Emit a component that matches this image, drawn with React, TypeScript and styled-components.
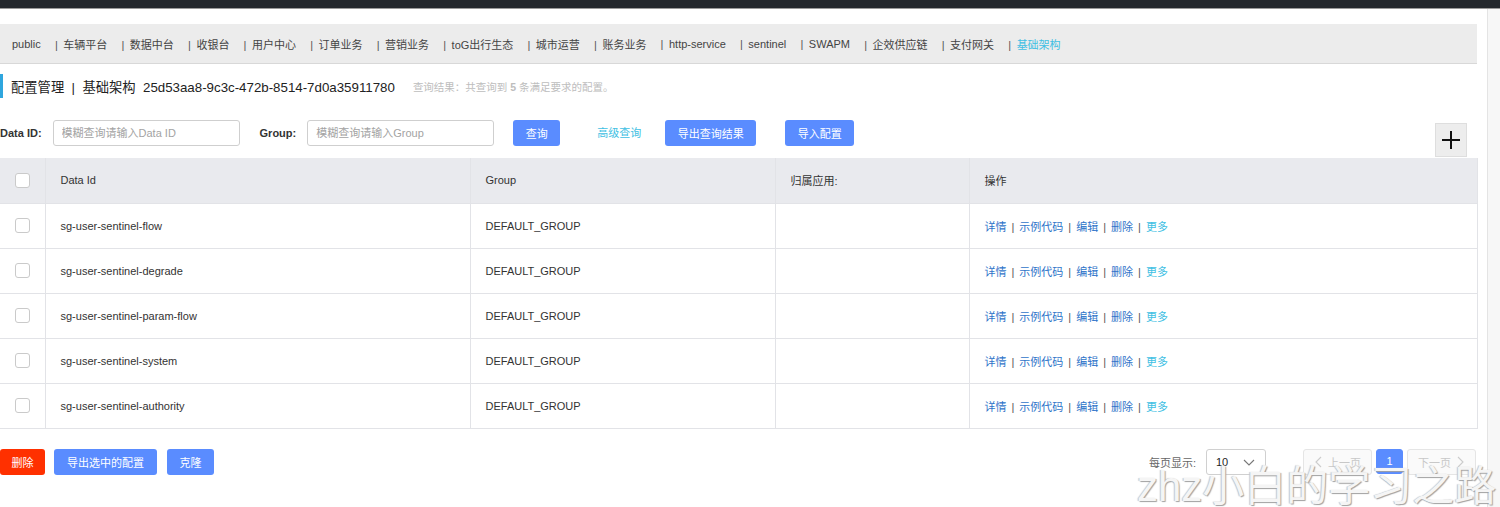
import styled, { createGlobalStyle } from "styled-components";

const GlobalStyle = createGlobalStyle`
  body {
    margin: 0;
    font-family: "Liberation Sans", "Noto Sans CJK SC", sans-serif;
    color: #333;
    background: #fff;
    overflow: hidden;
  }
`;

const TopBar = styled.div`
  height: 8px;
  background: #24282d;
  border-bottom: 1px solid #9a9a9a;
`;

const Shell = styled.div`
  display: flex;
  height: 498px;
`;

const Content = styled.div`
  width: 1487px;
  padding-top: 15px;
  position: relative;
`;

const Track = styled.div`
  flex: 1;
  background: #f7f7f7;
  border-left: 1px solid #e4e4e4;
`;

const Nav = styled.div`
  width: 1465px;
  height: 39px;
  padding-left: 12px;
  background: #ececec;
  border-bottom: 1px solid #d8d8d8;
  display: flex;
  align-items: center;
  font-size: 11px;
  color: #444;
`;

const NavItem = styled.span<{ $active?: boolean }>`
  color: ${(p) => (p.$active ? "#3fbfe3" : "#444")};
  white-space: nowrap;
`;

const NavSep = styled.span`
  color: #555;
  margin: 0 5.5px 0 14.2px;
`;

const TitleRow = styled.div`
  margin-top: 10px;
  height: 24px;
  display: flex;
  align-items: center;
  border-left: 3px solid #2fa6de;
  padding-left: 8px;
`;

const Title = styled.span`
  font-size: 13.3px;
  color: #222;
  white-space: nowrap;
`;

const Hint = styled.span`
  margin-left: 18px;
  font-size: 10.5px;
  color: #bdbdbd;
  b {
    font-weight: bold;
  }
`;

const SearchRow = styled.div`
  margin-top: 22px;
  display: flex;
  align-items: flex-start;
  width: 1477px;
`;

const Label = styled.label<{ $gap?: number }>`
  height: 26px;
  line-height: 26px;
  font-size: 11px;
  font-weight: bold;
  color: #333;
  margin-left: ${(p) => p.$gap ?? 0}px;
  margin-right: 11px;
`;

const Input = styled.input`
  box-sizing: border-box;
  width: 187px;
  height: 26px;
  border: 1px solid #cfcfcf;
  border-radius: 3px;
  padding: 0 8px;
  font-family: inherit;
  font-size: 11px;
  outline: none;
  &::placeholder {
    color: #a3a3a3;
  }
`;

const Button = styled.button<{ $w: number; $gap?: number; $danger?: boolean }>`
  box-sizing: border-box;
  width: ${(p) => p.$w}px;
  height: 26px;
  margin-left: ${(p) => p.$gap ?? 0}px;
  border: none;
  border-radius: 3px;
  background: ${(p) => (p.$danger ? "#ff3000" : "#5a8cff")};
  color: #fff;
  font-family: inherit;
  font-size: 11px;
  padding: 0;
  cursor: pointer;
`;

const LinkText = styled.span<{ $gap?: number }>`
  margin-left: ${(p) => p.$gap ?? 0}px;
  height: 26px;
  line-height: 26px;
  font-size: 11px;
  color: #3fbfe3;
`;

const PlusButton = styled.button`
  margin-left: auto;
  margin-right: 10px;
  margin-top: 3px;
  width: 32px;
  height: 34px;
  border: 1px solid #dedede;
  background: #ededed;
  padding: 0;
  display: flex;
  align-items: center;
  justify-content: center;
`;

const Table = styled.table`
  margin-top: 1px;
  width: 1477px;
  border-collapse: collapse;
  table-layout: fixed;
  font-size: 11px;
`;

const Th = styled.th<{ $w: number }>`
  box-sizing: border-box;
  width: ${(p) => p.$w}px;
  height: 45px;
  background: #e9eaee;
  border: 1px solid #e2e3e7;
  border-top: none;
  text-align: left;
  font-weight: normal;
  color: #333;
  padding: 0 0 0 15px;
  &:first-child {
    border-left: none;
    padding: 0;
    text-align: center;
  }
`;

const Td = styled.td`
  box-sizing: border-box;
  height: 45px;
  border: 1px solid #e2e3e7;
  padding: 0 0 0 15px;
  color: #333;
  &:first-child {
    border-left: none;
    padding: 0;
    text-align: center;
  }
`;

const Check = styled.span`
  display: inline-block;
  box-sizing: border-box;
  width: 15px;
  height: 15px;
  border: 1px solid #cacaca;
  border-radius: 3px;
  background: #fff;
  vertical-align: middle;
`;

const Action = styled.span<{ $more?: boolean }>`
  color: ${(p) => (p.$more ? "#3fbfe3" : "#2f74c9")};
`;

const ActionSep = styled.span`
  color: #555;
  margin: 0 5px;
`;

const Footer = styled.div`
  margin-top: 20px;
  width: 1476px;
  display: flex;
  align-items: center;
  justify-content: space-between;
`;

const Group = styled.div`
  display: flex;
  align-items: center;
`;

const PageLabel = styled.span`
  font-size: 11px;
  color: #666;
  margin-right: 10px;
`;

const Select = styled.div`
  box-sizing: border-box;
  width: 60px;
  height: 26px;
  border: 1px solid #d0d0d0;
  border-radius: 3px;
  display: flex;
  align-items: center;
  justify-content: space-between;
  padding: 0 10px 0 9px;
  font-size: 11px;
  color: #222;
`;

const PageButton = styled.div<{ $w: number; $gap: number; $current?: boolean }>`
  box-sizing: border-box;
  width: ${(p) => p.$w}px;
  height: ${(p) => (p.$current ? 25 : 26)}px;
  margin-left: ${(p) => p.$gap}px;
  border: 1px solid ${(p) => (p.$current ? "#5a8cff" : "#e5e5e5")};
  border-radius: 3px;
  background: ${(p) => (p.$current ? "#5a8cff" : "#fafafa")};
  color: ${(p) => (p.$current ? "#fff" : "#c8c8c8")};
  font-size: 11px;
  display: flex;
  align-items: center;
  justify-content: center;
  gap: 5px;
  align-self: flex-start;
`;

const Watermark = styled.div`
  position: absolute;
  left: 1137px;
  top: 452px;
  font-size: 42px;
  line-height: 52px;
  color: #f5f5f5;
  text-shadow: 1px 1px 1px #a0a0a0, -1px 0 1px #c4c4c4;
  white-space: nowrap;
  pointer-events: none;
`;

const Chevron = ({ dir }: { dir: "left" | "right" | "down" }) => {
  const d =
    dir === "left" ? "M7 1 L2 6 L7 11" : dir === "right" ? "M2 1 L7 6 L2 11" : "M1 3 L6 8 L11 3";
  const w = dir === "down" ? 12 : 9;
  const h = dir === "down" ? 10 : 12;
  return (
    <svg width={w} height={h} viewBox={`0 0 ${w} ${h}`}>
      <path d={d} fill="none" stroke={dir === "down" ? "#777" : "#ccc"} strokeWidth="1.1" />
    </svg>
  );
};

const navItems = [
  "public",
  "车辆平台",
  "数据中台",
  "收银台",
  "用户中心",
  "订单业务",
  "营销业务",
  "toG出行生态",
  "城市运营",
  "账务业务",
  "http-service",
  "sentinel",
  "SWAPM",
  "企效供应链",
  "支付网关",
  "基础架构",
];

const rows = [
  "sg-user-sentinel-flow",
  "sg-user-sentinel-degrade",
  "sg-user-sentinel-param-flow",
  "sg-user-sentinel-system",
  "sg-user-sentinel-authority",
];

const actions = ["详情", "示例代码", "编辑", "删除"];

function App() {
  return (
    <>
      <GlobalStyle />
      <TopBar />
      <Shell>
        <Content>
          <Nav>
            {navItems.map((n, i) => (
              <span key={n}>
                {i > 0 && <NavSep>|</NavSep>}
                <NavItem $active={i === navItems.length - 1}>{n}</NavItem>
              </span>
            ))}
          </Nav>
          <TitleRow>
            <Title>配置管理&nbsp;&nbsp;|&nbsp;&nbsp;基础架构&nbsp;&nbsp;25d53aa8-9c3c-472b-8514-7d0a35911780</Title>
            <Hint>
              查询结果：共查询到 <b>5</b> 条满足要求的配置。
            </Hint>
          </TitleRow>
          <SearchRow>
            <Label>Data ID:</Label>
            <Input placeholder="模糊查询请输入Data ID" />
            <Label $gap={20}>Group:</Label>
            <Input placeholder="模糊查询请输入Group" />
            <Button $w={47} $gap={19}>查询</Button>
            <LinkText $gap={37}>高级查询</LinkText>
            <Button $w={91} $gap={24}>导出查询结果</Button>
            <Button $w={69} $gap={29}>导入配置</Button>
            <PlusButton>
              <svg width="20" height="20" viewBox="0 0 20 20">
                <path d="M10 1 V19 M1 10 H19" stroke="#111" strokeWidth="2" />
              </svg>
            </PlusButton>
          </SearchRow>
          <Table>
            <thead>
              <tr>
                <Th $w={45}>
                  <Check />
                </Th>
                <Th $w={425}>Data Id</Th>
                <Th $w={305}>Group</Th>
                <Th $w={194}>归属应用:</Th>
                <Th $w={508}>操作</Th>
              </tr>
            </thead>
            <tbody>
              {rows.map((r) => (
                <tr key={r}>
                  <Td>
                    <Check />
                  </Td>
                  <Td>{r}</Td>
                  <Td>DEFAULT_GROUP</Td>
                  <Td></Td>
                  <Td>
                    {actions.map((a) => (
                      <span key={a}>
                        <Action>{a}</Action>
                        <ActionSep>|</ActionSep>
                      </span>
                    ))}
                    <Action $more>更多</Action>
                  </Td>
                </tr>
              ))}
            </tbody>
          </Table>
          <Footer>
            <Group>
              <Button $w={45} $danger>删除</Button>
              <Button $w={103} $gap={9}>导出选中的配置</Button>
              <Button $w={47} $gap={10}>克隆</Button>
            </Group>
            <Group>
              <PageLabel>每页显示:</PageLabel>
              <Select>
                <span>10</span>
                <Chevron dir="down" />
              </Select>
              <PageButton $w={69} $gap={37}>
                <Chevron dir="left" />
                上一页
              </PageButton>
              <PageButton $w={27} $gap={4} $current>
                1
              </PageButton>
              <PageButton $w={69} $gap={4}>
                下一页
                <Chevron dir="right" />
              </PageButton>
            </Group>
          </Footer>
          <Watermark>zhz小白的学习之路</Watermark>
        </Content>
        <Track />
      </Shell>
    </>
  );
}

export default App;
